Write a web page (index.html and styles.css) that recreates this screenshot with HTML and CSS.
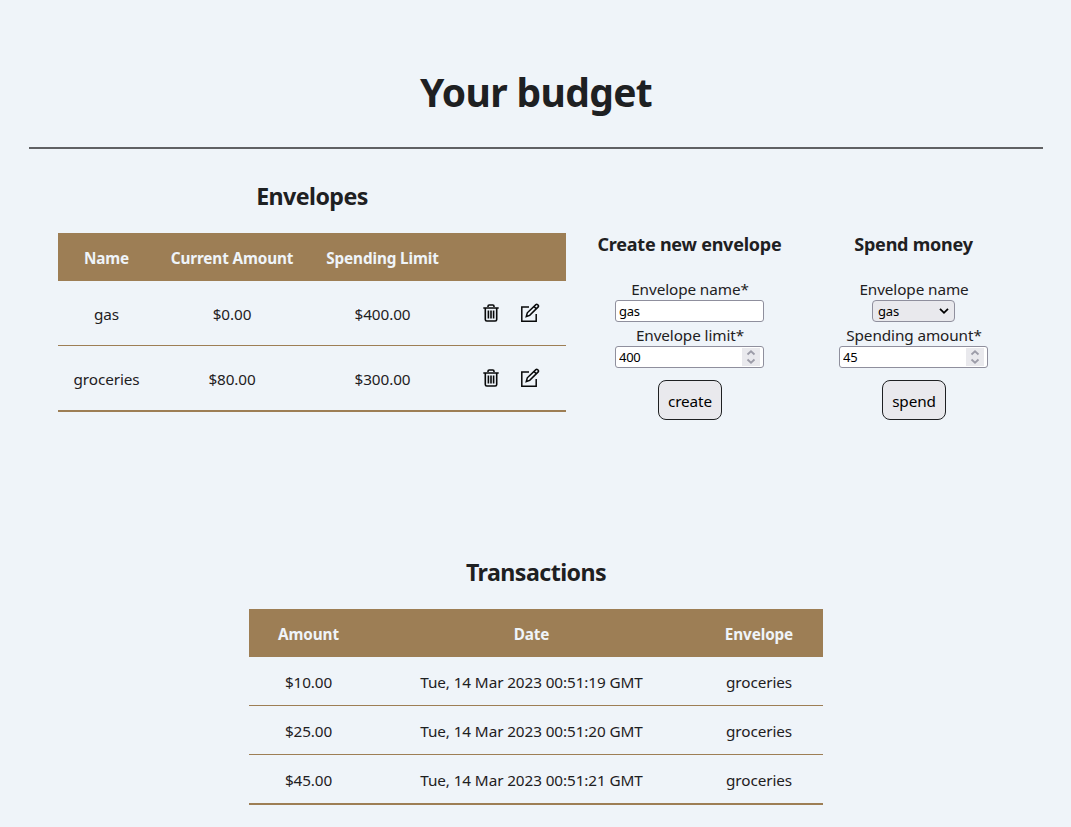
FILE: index.html
```html
<!DOCTYPE html>
<html lang="en">
<head>
<meta charset="utf-8">
<title>Your budget</title>
<link rel="stylesheet" href="styles.css">
</head>
<body>
<svg width="0" height="0" class="symbols">
  <symbol id="trash" viewBox="0 0 16 18">
    <path d="M5 3V2.200Q5 1 6.200 1h3.600Q11 1 11 2.200V3M.3 4h15.400M2.300 4v11.500q0 1.500 1.500 1.500h8.400q1.500 0 1.500-1.500V4M5.400 6.500v8M8 6.500v8M10.600 6.500v8"/>
  </symbol>
  <symbol id="edit" viewBox="0 0 20 20">
    <path d="M9 4H1.800v14.200h14.400V11M6.300 13.500l1-3.700 8.600-8.200q.8-.7 1.600 0l.7.7q.7.8 0 1.600L9.700 12.400zM14 3.500l2.400 2.400"/>
  </symbol>
  <symbol id="spinner" viewBox="0 0 18 18">
    <path d="M5.500 6.500 9 3.300l3.500 3.200M5.500 11.500 9 14.700l3.500-3.200"/>
  </symbol>
</svg>
<header class="page-header"><h1>Your budget</h1></header>
<main>
  <div class="overview">
    <section class="envelopes">
      <h2>Envelopes</h2>
      <table>
        <colgroup><col class="c-name"><col class="c-current"><col class="c-limit"><col class="c-actions"></colgroup>
        <thead><tr><th>Name</th><th>Current Amount</th><th>Spending Limit</th><th></th></tr></thead>
        <tbody>
          <tr><td>gas</td><td>$0.00</td><td>$400.00</td><td><div class="actions"><svg class="trash"><use href="#trash"/></svg><svg class="edit"><use href="#edit"/></svg></div></td></tr>
          <tr><td>groceries</td><td>$80.00</td><td>$300.00</td><td><div class="actions"><svg class="trash"><use href="#trash"/></svg><svg class="edit"><use href="#edit"/></svg></div></td></tr>
        </tbody>
      </table>
    </section>
    <form class="panel">
      <h3>Create new envelope</h3>
      <label for="name">Envelope name*</label>
      <div class="field"><input id="name" value="gas"></div>
      <label for="limit">Envelope limit*</label>
      <div class="field"><input id="limit" value="400"><svg class="spinner"><use href="#spinner"/></svg></div>
      <button type="button">create</button>
    </form>
    <form class="panel">
      <h3>Spend money</h3>
      <label>Envelope name</label>
      <div class="select"><span>gas</span><svg class="chevron" viewBox="0 0 10 8"><path d="M1 1.800 5 5.800 9 1.800"/></svg></div>
      <label for="amount">Spending amount*</label>
      <div class="field"><input id="amount" value="45"><svg class="spinner"><use href="#spinner"/></svg></div>
      <button type="button">spend</button>
    </form>
  </div>
  <section class="transactions">
    <h2>Transactions</h2>
    <table>
      <colgroup><col class="c-amount"><col class="c-date"><col class="c-envelope"></colgroup>
      <thead><tr><th>Amount</th><th>Date</th><th>Envelope</th></tr></thead>
      <tbody>
        <tr><td>$10.00</td><td>Tue, 14 Mar 2023 00:51:19 GMT</td><td>groceries</td></tr>
        <tr><td>$25.00</td><td>Tue, 14 Mar 2023 00:51:20 GMT</td><td>groceries</td></tr>
        <tr><td>$45.00</td><td>Tue, 14 Mar 2023 00:51:21 GMT</td><td>groceries</td></tr>
      </tbody>
    </table>
  </section>
</main>
</body>
</html>
```
FILE: styles.css
```css
* { box-sizing: border-box; }
body {
  margin: 0;
  padding: 65px 28px 0 29px;
  background: #eff4f9;
  color: #1e2022;
  font: 15.3px/22px "Noto Sans", "Open Sans", sans-serif;
  letter-spacing: -0.1px;
}
.symbols { display: block; }
.page-header {
  height: 84px;
  border-bottom: 2px solid #606164;
  text-align: center;
}
h1, h2, h3 { margin: 0; font-weight: 700; text-align: center; }
h1 { font-size: 39px; line-height: 54px; letter-spacing: -0.65px; }
h2 { font-size: 23.2px; line-height: 32px; letter-spacing: -0.55px; }
h3 { font-size: 18px; line-height: 24px; letter-spacing: -0.23px; white-space: nowrap; }
.overview {
  display: grid;
  grid-template-columns: 508px 248px 200px;
  padding-left: 29px;
  height: 407px;
  align-items: start;
}
.envelopes { padding-top: 31px; }
table {
  table-layout: fixed;
  border-collapse: separate;
  border-spacing: 0;
  margin-top: 21px;
  text-align: center;
}
.envelopes table { width: 508px; }
.c-name { width: 97px; }
.c-current { width: 154px; }
.c-limit { width: 147px; }
.c-actions { width: 110px; }
th { height: 48px; padding: 2px 0 0; background: #9d7e55; color: #eff4f9; letter-spacing: -0.13px; white-space: nowrap; }
td { height: 49px; padding: 2px 0 0; border-bottom: 1px solid #9d7e55; }
.envelopes td { height: 65px; }
tbody tr:last-child td { border-bottom-width: 2px; height: 50px; }
.envelopes tbody tr:last-child td { height: 66px; }
.actions { display: flex; justify-content: center; align-items: center; gap: 21px; padding: 0 0 2px 1px; }
.trash, .edit { fill: none; stroke: #08090a; stroke-width: 1.6; }
.trash { width: 16px; height: 18px; }
.edit { width: 20px; height: 20px; stroke-width: 1.5; }
.panel { display: flex; flex-direction: column; align-items: center; padding-top: 83px; }
.panel h3 { margin: 0 1px 20px 0; }
.panel label { margin-top: 2px; white-space: nowrap; }
.field, .select { display: flex; align-items: center; height: 22px; background: #fff; border: 1px solid #8f8f9d; border-radius: 3px; }
.field { width: 149px; margin-right: 1px; padding: 1px 3px; }
.field input {
  flex: 1;
  min-width: 0;
  padding: 0;
  border: 0;
  outline: 0;
  background: transparent;
  color: #000;
  font: 13px/16px "Noto Sans", sans-serif;
  letter-spacing: -0.3px;
}
.select { width: 83px; margin-right: 1px; padding: 0 5px; justify-content: space-between; background: #e9e9ed; border-radius: 4px; color: #000; font-size: 13px; letter-spacing: -0.2px; }
.chevron { width: 10px; height: 8px; fill: none; stroke: #000; stroke-width: 1.8; }
.spinner { width: 18px; height: 18px; background: #e9e9ed; fill: none; stroke: #9c9ca8; stroke-width: 1.8; }
button {
  width: 64px;
  height: 40px;
  margin-top: 12px;
  padding: 1px 0 0;
  border: 1px solid #1e2022;
  border-radius: 8px;
  background: #e9e9ed;
  color: #000;
  font: inherit;
  letter-spacing: -0.1px;
}
.transactions { width: 574px; margin-left: 220px; }
.transactions table { width: 574px; }
.c-amount { width: 119px; }
.c-date { width: 327px; }
.c-envelope { width: 128px; }
```
